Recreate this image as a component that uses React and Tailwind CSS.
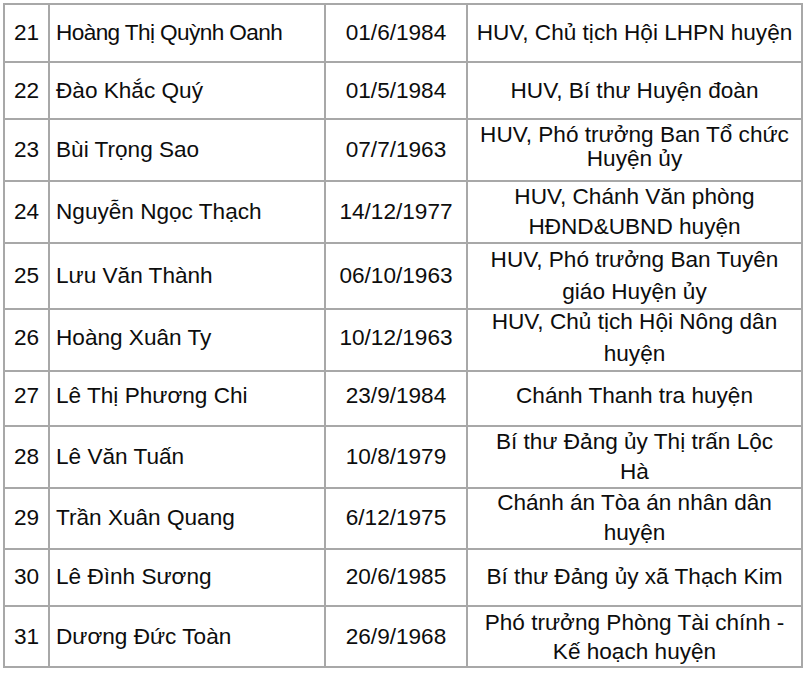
import React from "react";

const rows = [
  { n: "21", name: "Hoàng Thị Quỳnh Oanh", date: "01/6/1984", pos: ["HUV, Chủ tịch Hội LHPN huyện"], h: "h-[58px]", lh: "leading-[30px]", nameCls: "tracking-[-0.6px]" },
  { n: "22", name: "Đào Khắc Quý", date: "01/5/1984", pos: ["HUV, Bí thư Huyện đoàn"], h: "h-[57px]", lh: "leading-[30px]" },
  { n: "23", name: "Bùi Trọng Sao", date: "07/7/1963", pos: ["HUV, Phó trưởng Ban Tổ chức", "Huyện ủy"], h: "h-[62px]", lh: "leading-[24px] pb-[6px]" },
  { n: "24", name: "Nguyễn Ngọc Thạch", date: "14/12/1977", pos: ["HUV, Chánh Văn phòng", "HĐND&UBND huyện"], h: "h-[62px]", lh: "leading-[30px]" },
  { n: "25", name: "Lưu Văn Thành", date: "06/10/1963", pos: ["HUV, Phó trưởng Ban Tuyên", "giáo Huyện ủy"], h: "h-[62px]", lh: "leading-[32px]" },
  { n: "26", name: "Hoàng Xuân Ty", date: "10/12/1963", pos: ["HUV, Chủ tịch Hội Nông dân", "huyện"], h: "h-[61px]", lh: "leading-[32px]" },
  { n: "27", name: "Lê Thị Phương Chi", date: "23/9/1984", pos: ["Chánh Thanh tra huyện"], h: "h-[60px]", lh: "leading-[30px]" },
  { n: "28", name: "Lê Văn Tuấn", date: "10/8/1979", pos: ["Bí thư Đảng ủy Thị trấn Lộc", "Hà"], h: "h-[61px]", lh: "leading-[30px]" },
  { n: "29", name: "Trần Xuân Quang", date: "6/12/1975", pos: ["Chánh án Tòa án nhân dân", "huyện"], h: "h-[61px]", lh: "leading-[30px]" },
  { n: "30", name: "Lê Đình Sương", date: "20/6/1985", pos: ["Bí thư Đảng ủy xã Thạch Kim"], h: "h-[58px]", lh: "leading-[30px]" },
  { n: "31", name: "Dương Đức Toàn", date: "26/9/1968", pos: ["Phó trưởng Phòng Tài chính -", "Kế hoạch huyện"], h: "h-[61px]", lh: "leading-[29px]" },
];

export default function App() {
  return (
    <div
      className="w-[810px] h-[675px] bg-white text-[#0d0d0d] text-[22.6px] pt-[3px] pl-[3px]"
      style={{ fontFamily: '"Liberation Sans", Arial, Helvetica, sans-serif' }}
    >
      <div className="w-[800px] border-t-2 border-l-2 border-[#a8a8a8]">
        {rows.map((r) => (
          <div key={r.n} className={`grid grid-cols-[45px_276px_142px_335px] ${r.h}`}>
            <div className="flex items-center justify-center border-r-2 border-b-2 border-[#a8a8a8]">
              {r.n}
            </div>
            <div className={`flex items-center pl-[6px] whitespace-nowrap border-r-2 border-b-2 border-[#a8a8a8] ${r.nameCls || ""}`}>
              {r.name}
            </div>
            <div className="flex items-center justify-center border-r-2 border-b-2 border-[#a8a8a8]">
              {r.date}
            </div>
            <div className="flex items-center justify-center border-r-2 border-b-2 border-[#a8a8a8]">
              <div className={`text-center whitespace-nowrap ${r.lh}`}>
                {r.pos.map((p, i) => (
                  <div key={i}>{p}</div>
                ))}
              </div>
            </div>
          </div>
        ))}
      </div>
    </div>
  );
}
